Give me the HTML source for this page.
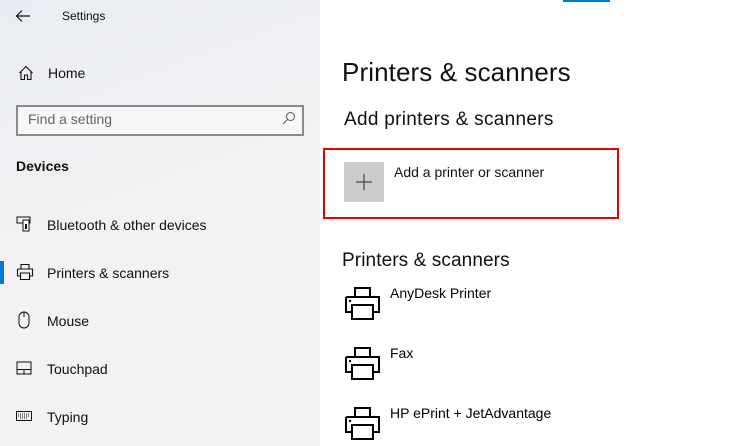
<!DOCTYPE html>
<html><head><style>
body{margin:0;width:733px;height:446px;overflow:hidden;font-family:"Liberation Sans",sans-serif;background:#fff;position:relative;color:#000}
.side{position:absolute;left:0;top:0;width:320px;height:446px;background:linear-gradient(160deg,#e9edf3 0%,#eff0f3 30%,#f3f1f3 50%,#f2f2f2 100%)}
.t{position:absolute;white-space:nowrap}
.nav{font-size:14px;color:#111}
svg{position:absolute}
</style></head><body>
<div class="side">
<svg style="left:15px;top:9px" width="16" height="14" viewBox="0 0 16 14"><path d="M15 7H2M7 1.5L1.5 7 7 12.5" stroke="#111" stroke-width="1.2" fill="none"/></svg>
<div class="t" style="left:62px;top:9px;font-size:12px;color:#111">Settings</div>
<svg style="left:18px;top:65px" width="16" height="16" viewBox="0 0 16 16"><path d="M1.5 8L8 1.5 14.5 8M3 6.5V14.5h3.5V10h3v4.5H13V6.5" stroke="#111" stroke-width="1.1" fill="none"/></svg>
<div class="t nav" style="left:48px;top:65px">Home</div>
<div style="position:absolute;left:16px;top:105px;width:284px;height:27px;border:2px solid #8a8a8a;background:#f7f7f8"></div>
<div class="t" style="left:28px;top:111px;font-size:14px;color:#666">Find a setting</div>
<svg style="left:282px;top:111px" width="14" height="14" viewBox="0 0 14 14"><circle cx="8.5" cy="5.5" r="4" stroke="#555" fill="none"/><path d="M5.5 8.5L1 13" stroke="#555"/></svg>
<div class="t" style="left:16px;top:158px;font-size:14px;font-weight:bold;color:#111">Devices</div>
<svg style="left:16px;top:216px" width="16" height="16" viewBox="0 0 16 16"><rect x="1" y="1" width="13" height="6" stroke="#111" fill="none"/><rect x="7" y="4" width="6" height="11" stroke="#111" fill="#fff"/><rect x="9" y="8" width="2" height="5" fill="#111"/></svg>
<div class="t nav" style="left:47px;top:217px">Bluetooth &amp; other devices</div>
<div style="position:absolute;left:0;top:261px;width:4px;height:23px;background:#0078d7"></div>
<svg style="left:16px;top:263px" width="18" height="18" viewBox="0 0 18 18"><path d="M5 6V1.5h8V6M1.5 6h15v7h-3M4.5 13h-3V6M4.5 10h9v6.5h-9z" stroke="#111" stroke-width="1.1" fill="none"/></svg>
<div class="t nav" style="left:47px;top:265px">Printers &amp; scanners</div>
<svg style="left:18px;top:311px" width="12" height="18" viewBox="0 0 12 18"><rect x="1" y="1" width="10" height="16" rx="5" stroke="#111" fill="none"/><path d="M6 1v5" stroke="#111"/></svg>
<div class="t nav" style="left:47px;top:313px">Mouse</div>
<svg style="left:16px;top:361px" width="16" height="14" viewBox="0 0 16 14"><rect x="1" y="1" width="14" height="12" stroke="#111" fill="none"/><path d="M1 8.5h14M8 8.5V13" stroke="#111"/></svg>
<div class="t nav" style="left:47px;top:361px">Touchpad</div>
<svg style="left:16px;top:411px" width="16" height="10" viewBox="0 0 16 10"><rect x="0.5" y="0.5" width="15" height="9" stroke="#111" fill="none"/><path d="M2 3h12M2 5h12M4 7h8" stroke="#111" stroke-dasharray="1 1"/></svg>
<div class="t nav" style="left:47px;top:409px">Typing</div>
</div>
<div style="position:absolute;left:563px;top:0;width:47px;height:2px;background:#0078d7"></div>
<div class="t" style="left:342px;top:57px;font-size:26px;color:#111;letter-spacing:0.1px">Printers &amp; scanners</div>
<div class="t" style="left:344px;top:109px;font-size:19px;color:#111;letter-spacing:0.3px">Add printers &amp; scanners</div>
<div style="position:absolute;left:323px;top:148px;width:292px;height:67px;border:2px solid #e00"></div>
<div style="position:absolute;left:344px;top:162px;width:40px;height:40px;background:#cccccc"></div>
<svg style="left:355px;top:173px" width="18" height="18" viewBox="0 0 18 18"><path d="M9 1v16M1 9h16" stroke="#444" stroke-width="1.2"/></svg>
<div class="t" style="left:394px;top:164px;font-size:14px;color:#111">Add a printer or scanner</div>
<div class="t" style="left:342px;top:250px;font-size:19px;color:#111;letter-spacing:0.1px">Printers &amp; scanners</div>
<svg style="left:344px;top:286px" width="36" height="36" viewBox="0 0 36 36"><path d="M11 11V2h15v9M2 11h33v15h-6M8 26H2V11M8 19h21v14H8z" stroke="#000" stroke-width="2" fill="none"/><rect x="5" y="14" width="2" height="2" fill="#000"/></svg>
<div class="t" style="left:390px;top:285px;font-size:14px">AnyDesk Printer</div>
<svg style="left:344px;top:346px" width="36" height="36" viewBox="0 0 36 36"><path d="M11 11V2h15v9M2 11h33v15h-6M8 26H2V11M8 19h21v14H8z" stroke="#000" stroke-width="2" fill="none"/><rect x="5" y="14" width="2" height="2" fill="#000"/></svg>
<div class="t" style="left:390px;top:345px;font-size:14px">Fax</div>
<svg style="left:344px;top:406px" width="36" height="36" viewBox="0 0 36 36"><path d="M11 11V2h15v9M2 11h33v15h-6M8 26H2V11M8 19h21v14H8z" stroke="#000" stroke-width="2" fill="none"/><rect x="5" y="14" width="2" height="2" fill="#000"/></svg>
<div class="t" style="left:390px;top:405px;font-size:14px">HP ePrint + JetAdvantage</div>
</body></html>
